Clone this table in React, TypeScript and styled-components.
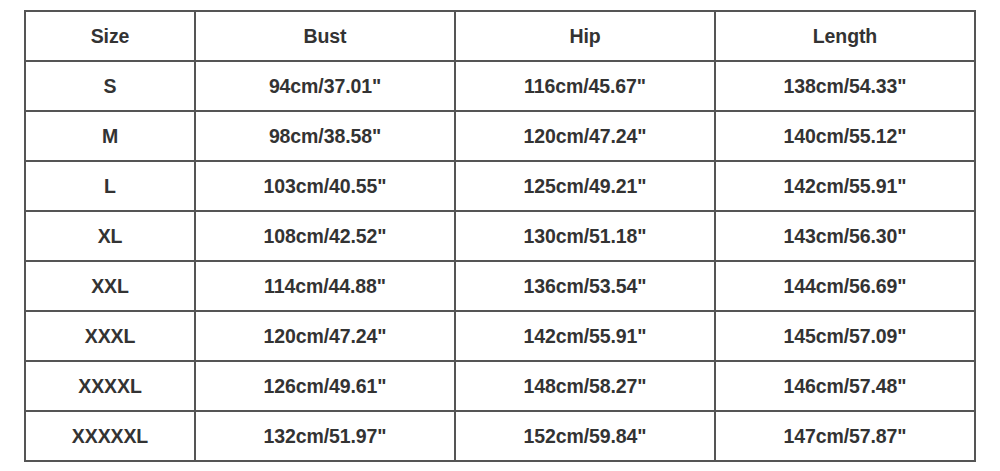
import React from "react"
import styled, { createGlobalStyle } from "styled-components"

const GlobalStyle = createGlobalStyle`
  html, body {
    margin: 0;
    padding: 0;
    background: #ffffff;
  }
  body {
    font-family: "Liberation Sans", Arial, sans-serif;
  }
`

const Page = styled.div`
  width: 1000px;
  height: 471px;
  padding: 10px 0 0 24px;
  box-sizing: border-box;
`

const Table = styled.table`
  border-collapse: collapse;
  table-layout: fixed;
  width: 952px;
`

const Col = styled.col<{ $wide?: boolean }>`
  width: ${(p) => (p.$wide ? "260px" : "170px")};
`

const Cell = styled.td`
  height: 48px;
  padding: 0;
  border: 2px solid #555555;
  text-align: center;
  vertical-align: middle;
  font-size: 19.5px;
  font-weight: 700;
  color: #333333;
  letter-spacing: -0.1px;
  white-space: nowrap;
`

const rows: string[][] = [
  ["Size", "Bust", "Hip", "Length"],
  ["S", "94cm/37.01\"", "116cm/45.67\"", "138cm/54.33\""],
  ["M", "98cm/38.58\"", "120cm/47.24\"", "140cm/55.12\""],
  ["L", "103cm/40.55\"", "125cm/49.21\"", "142cm/55.91\""],
  ["XL", "108cm/42.52\"", "130cm/51.18\"", "143cm/56.30\""],
  ["XXL", "114cm/44.88\"", "136cm/53.54\"", "144cm/56.69\""],
  ["XXXL", "120cm/47.24\"", "142cm/55.91\"", "145cm/57.09\""],
  ["XXXXL", "126cm/49.61\"", "148cm/58.27\"", "146cm/57.48\""],
  ["XXXXXL", "132cm/51.97\"", "152cm/59.84\"", "147cm/57.87\""],
]

export default function App() {
  return (
    <Page>
      <GlobalStyle />
      <Table>
        <colgroup>
          <Col />
          <Col $wide />
          <Col $wide />
          <Col $wide />
        </colgroup>
        <tbody>
          {rows.map((row, i) => (
            <tr key={i}>
              {row.map((text, j) => (
                <Cell key={j}>{text}</Cell>
              ))}
            </tr>
          ))}
        </tbody>
      </Table>
    </Page>
  )
}
